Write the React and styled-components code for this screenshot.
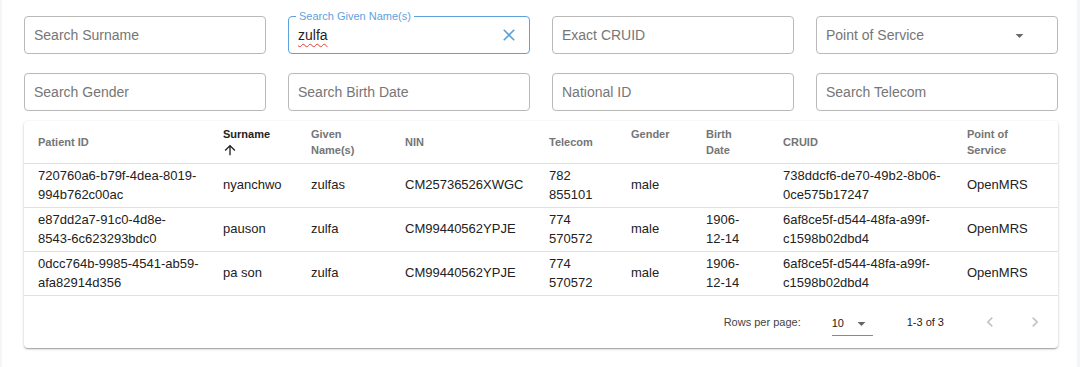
import React from 'react';
import styled, { createGlobalStyle } from 'styled-components';

const GlobalStyle = createGlobalStyle`
  body {
    margin: 0;
    background: #f3f6f9;
    font-family: "Liberation Sans", Arial, sans-serif;
  }
`;

const Page = styled.div`
  margin: 0 3px 0 2px;
  min-height: 367px;
  box-sizing: border-box;
  background: #fff;
  padding: 16px 19px 0 22px;
`;

const Filters = styled.div`
  display: grid;
  grid-template-columns: repeat(4, 242px);
  column-gap: 22px;
  row-gap: 19px;
`;

const FieldBox = styled.div`
  position: relative;
  display: flex;
  align-items: center;
  height: 38px;
  box-sizing: border-box;
  padding: 0 9px;
  border: 1px solid ${p => (p.$focused ? '#5ea2dc' : '#b9b9b9')};
  border-radius: 4px;
`;

const FloatLabel = styled.span`
  position: absolute;
  top: -7px;
  left: 7px;
  padding: 0 3px;
  background: #fff;
  font-size: 11px;
  line-height: 12px;
  color: #5ea2dc;
`;

const FieldText = styled.span`
  flex: 1;
  font-size: 14px;
  padding-bottom: 1px;
  color: ${p => (p.$placeholder ? '#767676' : '#1f1f1f')};
  ${p => p.$misspelt && 'text-decoration: underline wavy #e53935; text-decoration-thickness: 1px; text-underline-offset: 3px;'}
`;

const IconSlot = styled.span`
  display: flex;
  align-items: center;
  color: ${p => p.$color || '#666'};
  margin-right: ${p => p.$right || 0}px;
`;

const Card = styled.div`
  margin-top: 10px;
  background: #fff;
  border-radius: 4px;
  box-shadow: 0 1px 3px rgba(0, 0, 0, 0.2), 0 1px 1px rgba(0, 0, 0, 0.14), 0 2px 1px -1px rgba(0, 0, 0, 0.12);
  overflow: hidden;
`;

const Table = styled.table`
  width: 100%;
  border-collapse: collapse;
  table-layout: fixed;
`;

const HeadCell = styled.th`
  height: 42px;
  box-sizing: border-box;
  padding: 0 16px 0 14px;
  text-align: left;
  vertical-align: middle;
  font-size: 11px;
  line-height: 16px;
  font-weight: 700;
  color: ${p => (p.$active ? '#222' : '#757575')};
  border-bottom: 1px solid #e0e0e0;
`;

const SortArrow = styled.svg`
  display: block;
  width: 16px;
  height: 16px;
  margin-left: -1px;
  fill: #222;
  opacity: ${p => (p.$shown ? 1 : 0)};
`;

const Cell = styled.td`
  height: 44px;
  box-sizing: border-box;
  padding: 0 ${p => p.$padRight}px 0 14px;
  vertical-align: middle;
  font-size: 13px;
  line-height: 19.5px;
  color: #222;
  border-bottom: 1px solid #e0e0e0;
`;

const Footer = styled.div`
  display: flex;
  align-items: center;
  justify-content: flex-end;
  height: 52px;
  padding-right: 7px;
  font-size: 11px;
  color: #444;
`;

const RowsLabel = styled.span`
  margin-right: 31px;
`;

const PageSelect = styled.div`
  display: flex;
  align-items: center;
  justify-content: space-between;
  width: 41px;
  height: 24px;
  margin-top: 4px;
  box-sizing: border-box;
  border-bottom: 1px solid #8a8a8a;
  color: #222;
  margin-right: 34px;
`;

const RangeText = styled.span`
  color: #222;
  margin-right: 30px;
`;

const PageButton = styled.span`
  display: flex;
  align-items: center;
  justify-content: center;
  width: 32px;
  height: 32px;
  margin-left: ${p => p.$gap || 0}px;
  color: #c4c4c4;
`;

const columns = [
  { key: 'id', label: 'Patient ID', width: 185, padRight: 10.2 },
  { key: 'surname', label: 'Surname', width: 88, sort: true, active: true },
  { key: 'given', label: 'Given Name(s)', width: 94 },
  { key: 'nin', label: 'NIN', width: 144 },
  { key: 'telecom', label: 'Telecom', width: 82 },
  { key: 'gender', label: 'Gender', width: 75, sort: true },
  { key: 'birth', label: 'Birth Date', width: 77, padRight: 20 },
  { key: 'cruid', label: 'CRUID', width: 184 },
  { key: 'pos', label: 'Point of Service', width: 105 },
];

const rows = [
  {
    id: '720760a6-b79f-4dea-8019-994b762c00ac',
    surname: 'nyanchwo',
    given: 'zulfas',
    nin: 'CM25736526XWGC',
    telecom: '782 855101',
    gender: 'male',
    birth: '',
    cruid: '738ddcf6-de70-49b2-8b06-0ce575b17247',
    pos: 'OpenMRS',
  },
  {
    id: 'e87dd2a7-91c0-4d8e-8543-6c623293bdc0',
    surname: 'pauson',
    given: 'zulfa',
    nin: 'CM99440562YPJE',
    telecom: '774 570572',
    gender: 'male',
    birth: '1906-12-14',
    cruid: '6af8ce5f-d544-48fa-a99f-c1598b02dbd4',
    pos: 'OpenMRS',
  },
  {
    id: '0dcc764b-9985-4541-ab59-afa82914d356',
    surname: 'pa son',
    given: 'zulfa',
    nin: 'CM99440562YPJE',
    telecom: '774 570572',
    gender: 'male',
    birth: '1906-12-14',
    cruid: '6af8ce5f-d544-48fa-a99f-c1598b02dbd4',
    pos: 'OpenMRS',
  },
];

const filters = [
  { placeholder: 'Search Surname' },
  { label: 'Search Given Name(s)', value: 'zulfa', clearable: true },
  { placeholder: 'Exact CRUID' },
  { placeholder: 'Point of Service', select: true },
  { placeholder: 'Search Gender' },
  { placeholder: 'Search Birth Date' },
  { placeholder: 'National ID' },
  { placeholder: 'Search Telecom' },
];

const DropArrow = ({ size = 24 }) => (
  <svg width={size} height={size} viewBox="0 0 24 24" fill="currentColor">
    <path d="M7 10l5 5 5-5z" />
  </svg>
);

const ClearIcon = () => (
  <svg width="20" height="20" viewBox="0 0 24 24" fill="currentColor">
    <path d="M19 6.41L17.59 5 12 10.59 6.41 5 5 6.41 10.59 12 5 17.59 6.41 19 12 13.41 17.59 19 19 17.59 13.41 12z" />
  </svg>
);

const Chevron = ({ dir }) => (
  <svg width="20" height="20" viewBox="0 0 24 24" fill="currentColor">
    {dir === 'left' ? (
      <path d="M15.41 7.41L14 6l-6 6 6 6 1.41-1.41L10.83 12z" />
    ) : (
      <path d="M10 6L8.59 7.41 13.17 12l-4.58 4.59L10 18l6-6z" />
    )}
  </svg>
);

function Filter({ placeholder, label, value, clearable, select }) {
  return (
    <FieldBox $focused={!!label}>
      {label && <FloatLabel>{label}</FloatLabel>}
      <FieldText $placeholder={!value} $misspelt={!!value}>
        {value || placeholder}
      </FieldText>
      {clearable && (
        <IconSlot $color="#5ea2dc" $right={1}>
          <ClearIcon />
        </IconSlot>
      )}
      {select && (
        <IconSlot $color="#6b6b6b" $right={19}>
          <DropArrow size={19} />
        </IconSlot>
      )}
    </FieldBox>
  );
}

export default function App() {
  return (
    <>
      <GlobalStyle />
      <Page>
        <Filters>
          {filters.map((f, i) => (
            <Filter key={i} {...f} />
          ))}
        </Filters>
        <Card>
          <Table>
            <colgroup>
              {columns.map(c => (
                <col key={c.key} style={{ width: c.width }} />
              ))}
            </colgroup>
            <thead>
              <tr>
                {columns.map(c => (
                  <HeadCell key={c.key} $active={c.active}>
                    {c.label}
                    {c.sort && (
                      <SortArrow $shown={c.active} viewBox="0 0 24 24">
                        <path d="M4 12l1.41 1.41L11 7.83V20h2V7.83l5.58 5.59L20 12l-8-8-8 8z" />
                      </SortArrow>
                    )}
                  </HeadCell>
                ))}
              </tr>
            </thead>
            <tbody>
              {rows.map((r, i) => (
                <tr key={i}>
                  {columns.map(c => (
                    <Cell key={c.key} $padRight={c.padRight ?? 4}>
                      {r[c.key]}
                    </Cell>
                  ))}
                </tr>
              ))}
            </tbody>
          </Table>
          <Footer>
            <RowsLabel>Rows per page:</RowsLabel>
            <PageSelect>
              <span>10</span>
              <IconSlot $color="#666" $right={2}>
                <DropArrow size={19} />
              </IconSlot>
            </PageSelect>
            <RangeText>1-3 of 3</RangeText>
            <PageButton>
              <Chevron dir="left" />
            </PageButton>
            <PageButton $gap={13}>
              <Chevron dir="right" />
            </PageButton>
          </Footer>
        </Card>
      </Page>
    </>
  );
}
